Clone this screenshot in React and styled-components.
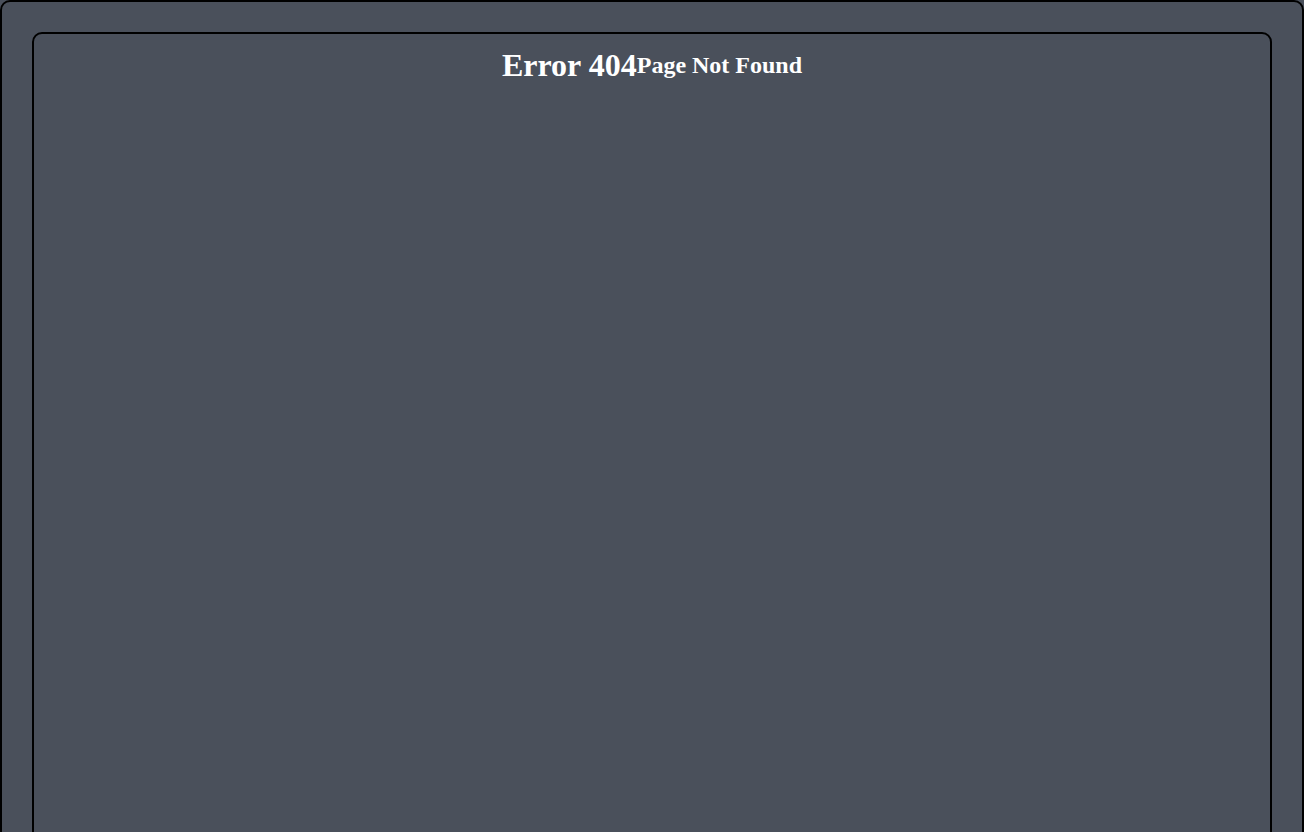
import React from "react";
import styled, { createGlobalStyle } from "styled-components";

const GlobalStyle = createGlobalStyle`
  body {
    margin: 0;
    background: #4a505b;
    font-family: "Liberation Serif", "Times New Roman", serif;
  }
`;

const Frame = styled.div`
  min-height: 900px;
  background: #4a505b;
  border: 2px solid #000;
  border-radius: 10px;
  padding: 30px 30px 0;
  box-sizing: border-box;
`;

const Panel = styled.div`
  min-height: 868px;
  border: 2px solid #000;
  border-radius: 10px;
  padding-top: 13px;
  box-sizing: border-box;
`;

const Header = styled.div`
  display: flex;
  justify-content: center;
  align-items: center;
  color: #fff;
`;

const Code = styled.h1`
  margin: 0;
  font-size: 32px;
  font-weight: bold;
`;

const Message = styled.h2`
  margin: 0;
  font-size: 24px;
  font-weight: bold;
`;

function App() {
  return (
    <>
      <GlobalStyle />
      <Frame>
        <Panel>
          <Header>
            <Code>Error 404</Code>
            <Message>Page Not Found</Message>
          </Header>
        </Panel>
      </Frame>
    </>
  );
}

export default App;
